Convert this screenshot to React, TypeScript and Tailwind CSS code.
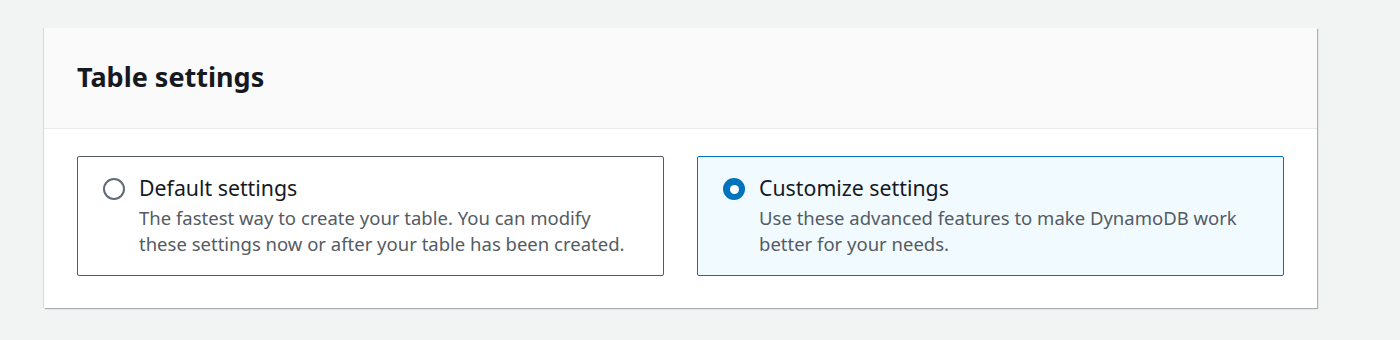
import React from 'react';

const options = [
  {
    id: 'default',
    title: 'Default settings',
    lines: ['The fastest way to create your table. You can modify', 'these settings now or after your table has been created.'],
  },
  {
    id: 'custom',
    title: 'Customize settings',
    lines: ['Use these advanced features to make DynamoDB work', 'better for your needs.'],
  },
];

function Radio({ checked }: { checked: boolean }) {
  if (checked) {
    return (
      <span className="mt-[3px] flex h-[22px] w-[22px] shrink-0 items-center justify-center rounded-full bg-[#0073bb]">
        <span className="h-[9px] w-[9px] rounded-full bg-white" />
      </span>
    );
  }
  return <span className="mt-[3px] h-[22px] w-[22px] shrink-0 rounded-full border-2 border-[#5f6b7a] bg-white" />;
}

export default function App() {
  const selected = 'custom';

  return (
    <div className="h-[340px] w-[1400px] bg-[#f2f3f3] pt-[28px] pl-[44px] font-['Noto_Sans',sans-serif]">
      <div className="w-[1273px] bg-white shadow-[1px_1px_1px_0_rgba(0,28,36,0.3),-1px_0_0_0_#d5dbdb]">
        <div className="h-[101px] border-b border-[#eaeded] bg-[#fafafa] px-[33px] pt-[35px]">
          <h2 className="text-[27px] leading-[28px] font-bold text-[#16191f]">Table settings</h2>
        </div>
        <div className="grid grid-cols-2 gap-[33px] px-[33px] pt-[27px] pb-[32px]">
          {options.map(opt => {
            const active = opt.id === selected;
            return (
              <div
                key={opt.id}
                className={`flex h-[120px] gap-[14px] rounded-[2px] border pl-[25px] pt-[18px] ${
                  active ? 'border-[#0073bb] bg-[#f1faff]' : 'border-[#545b64] bg-white'
                }`}
              >
                <Radio checked={active} />
                <div>
                  <div className="text-[21.3px] leading-[26px] text-[#16191f]">{opt.title}</div>
                  <div className="mt-[4px] text-[18.5px] leading-[26px] text-[#545b64]">
                    {opt.lines.map(l => (
                      <div key={l}>{l}</div>
                    ))}
                  </div>
                </div>
              </div>
            );
          })}
        </div>
      </div>
    </div>
  );
}
